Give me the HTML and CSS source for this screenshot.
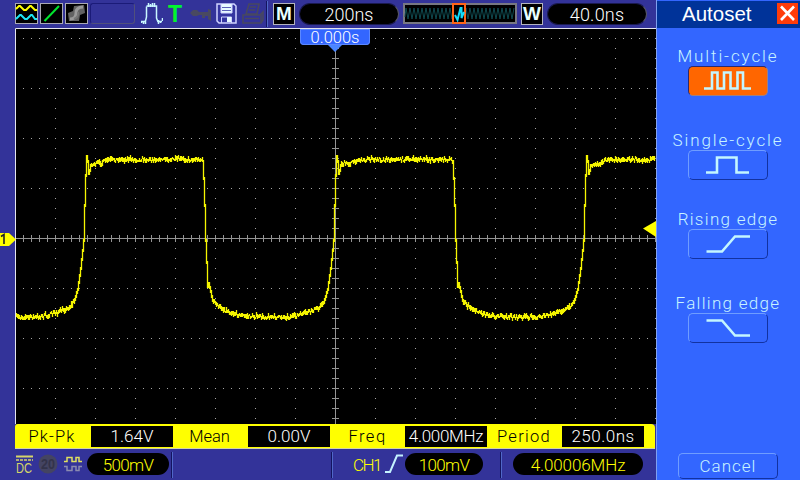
FILE: index.html
```
<!DOCTYPE html>
<html lang="en">
<head>
    <meta charset="UTF-8">
    <title>Oscilloscope</title>
    <link rel="stylesheet" href="styles.css">
</head>
<body>
    <div class="screen">
        <div class="scope">
            <div class="topbar">
                <svg class="tool" width="23" height="21" viewBox="0 0 23 21">
                    <rect x=".5" y=".5" width="22" height="20" fill="#000" stroke="#a9a9b4"/>
                    <path d="M1 6 l3 -3 h1 l4 4 h2 l4 -4 h1 l4 4 h2" fill="none" stroke="#ff0" stroke-width="2"/>
                    <path d="M1 16 l4 -4 h1 l4 4 h2 l4 -4 h1 l3 4 h2" fill="none" stroke="#1ee6f5" stroke-width="2"/>
                </svg>
                <svg class="tool" width="23" height="21" viewBox="0 0 23 21">
                    <rect x=".5" y=".5" width="22" height="20" fill="#000" stroke="#a9a9b4"/>
                    <path d="M4.500 18 L19 3" stroke="#00e62e" stroke-width="2"/>
                </svg>
                <svg class="tool" width="23" height="21" viewBox="0 0 23 21">
                    <rect x=".5" y=".5" width="22" height="20" fill="#000" stroke="#a9a9b4"/>
                    <path d="M3 10 L8 8 L9 3 L19 2 L20 10 L15 12 L14 18 L4 18 Z" fill="#626262"/>
                    <path d="M5 16 Q11 16 11 10 T18 4" fill="none" stroke="#999" stroke-width="3"/>
                    <path d="M9 16 Q14 14 13 9" fill="none" stroke="#777" stroke-width="2"/>
                </svg>
                <div class="slot"></div>
                <svg class="pulse" width="22" height="22" viewBox="0 0 22 22">
                    <path d="M.5 18v2M2.500 18v3M4.500 17v4V18L5.500 14V3.500M7.500 0v4M9.500 1v3M11.500 0v4M13.500 0v4M5.500 3h10V15l1.500 4M17.500 17v4M19.500 18v2M21.500 15v3M0 18.500h5M17 18.500h4" fill="none" stroke="#c9f7ff" stroke-width="1.500"/>
                </svg>
                <span class="trig">T</span>
                <svg class="key" width="23" height="14" viewBox="0 0 23 14">
                    <path d="M0 5 L3 2 H7 L9 4 H18 V1 L21 2 V13 L18 11 V8 H15 V10 H12 V7 H9 L7 8 H3 Z" fill="#494960"/>
                </svg>
                <svg class="disk" width="21" height="21" viewBox="0 0 21 21">
                    <path d="M1 1 H18 L20 3 V20 H3 L1 18 Z" fill="#3434a0" stroke="#cfd3ff" stroke-width="1.500"/>
                    <path d="M5 1 V10 H16 V1" fill="#e8fbff" stroke="#cfd3ff"/>
                    <path d="M6 4.500h9M6 7.500h9" stroke="#5c62b8"/>
                    <path d="M5.500 20 V14 H15.500 V20" fill="none" stroke="#cfd3ff"/>
                    <rect x="11" y="14" width="4" height="5" fill="#e8fbff"/>
                </svg>
                <svg class="printer" width="22" height="22" viewBox="0 0 22 22">
                    <path d="M7 1 H17 L15 11 H4 Z M1 12 H19 V20 H1 Z M18 12 l3 -3 v8 l-2 3 M8 4h6M7 7h6M3 15.500h14" fill="none" stroke="#484860" stroke-width="1.600"/>
                </svg>
                <div class="divider divider-top"></div>
                <div class="mode mode-m">M</div>
                <div class="pill pill-m"><span class="t18">200ns</span></div>
                <svg class="preview" width="114" height="21" viewBox="0 0 114 21">
                    <rect x="1" y="1" width="112" height="19" fill="#000" stroke="#777783" stroke-width="2"/>
                    <path id="mini" fill="none" stroke="#0f4a50" stroke-width="1"/>
                    <rect x="50" y="1" width="12" height="19" fill="#000" stroke="#ff6418" stroke-width="2"/>
                    <path d="M52 12 L54.500 17 L57.500 5 L58.500 5 V15 L61 9" fill="none" stroke="#12dcfa" stroke-width="2"/>
                </svg>
                <div class="mode mode-w">W</div>
                <div class="pill pill-w"><span class="t18 wide">40.0ns</span></div>
            </div>

            <div class="plot">
                <svg class="graph" width="641" height="396" viewBox="15 28 641 396">
                    <path id="grid" fill="none" stroke="#a6a6a6" stroke-width="1"/>
                    <path id="axis" fill="none" stroke="#949494" stroke-width="1"/>
                    <path id="trace" fill="none" stroke="#f5f500" stroke-width="1.300"/>
                    <path d="M643 228.500 L656 221 V237 Z" fill="#ff0"/>
                    <path d="M15.500 424 V28.500 H656" fill="none" stroke="#e4e4ee"/>
                </svg>
                <div class="offset">0.000s</div>
                <svg class="channel" width="16" height="15" viewBox="0 0 16 15">
                    <path d="M0 1 H9 L16 7.500 L9 14 H0 Z" fill="#ff0"/>
                    <path d="M1 4.500 L4 2.500 V12" fill="none" stroke="#222" stroke-width="1.600"/>
                </svg>
            </div>

            <div class="measures">
                <span class="name pk">Pk-Pk</span><span class="value">1.64V</span>
                <span class="name mean">Mean</span><span class="value">0.00V</span>
                <span class="name freq">Freq</span><span class="value mhz">4.000MHz</span>
                <span class="name period">Period</span><span class="value ns">250.0ns</span>
            </div>

            <div class="footer">
                <svg class="status" width="68" height="22" viewBox="0 0 68 22">
                    <path d="M1 2.500h17" stroke="#d5d56a" stroke-width="2"/>
                    <path d="M1 6h17" stroke="#d5d56a" stroke-width="1.500" stroke-dasharray="3 1"/>
                    <text class="dc" x="1" y="19" textLength="16" lengthAdjust="spacingAndGlyphs">DC</text>
                    <circle cx="33" cy="10" r="9.500" fill="#444462"/>
                    <text class="bw" x="26" y="15" textLength="14" lengthAdjust="spacingAndGlyphs">20</text>
                    <path d="M49 7.500h3v-4h5v4h4v-4h3v4h3" fill="none" stroke="#e0e060" stroke-width="1.500"/>
                    <path d="M49 12.500h3v4h5v-4h4v4h3v-4h3" fill="none" stroke="#8b8bb0" stroke-width="1.500"/>
                </svg>
                <div class="pill pill-ch"><span class="yellow mv">500mV</span></div>
                <div class="divider d1"></div>
                <div class="divider d2"></div>
                <span class="yellow ch">CH1</span>
                <svg class="slope" width="18" height="19" viewBox="0 0 18 19">
                    <path d="M0 18 H5 L12 1.500 H18" fill="none" stroke="#c4f2ff" stroke-width="2"/>
                </svg>
                <div class="pill pill-trig"><span class="yellow mv">100mV</span></div>
                <div class="divider d3"></div>
                <div class="pill pill-freq"><span class="yellow hz">4.00006MHz</span></div>
            </div>
        </div>

        <div class="menu">
            <div class="menu-head">
                <span class="title">Autoset</span>
                <svg class="close" width="21" height="21" viewBox="0 0 21 21">
                    <rect width="21" height="21" fill="#ff3c0a"/>
                    <path d="M4 3.500 L17 17 M17 3.500 L4 17" stroke="#fff" stroke-width="2.600"/>
                </svg>
            </div>
            <div class="item item1">
                <span class="label">Multi-cycle</span>
                <div class="btn active">
                    <svg width="80" height="30" viewBox="0 0 80 30"><path d="M16 22.500 H24 V6.500 H29.500 V22.500 H36 V6.500 H42.500 V22.500 H49.500 V6.500 H55 V22.500 H63"/></svg>
                </div>
            </div>
            <div class="item item2">
                <span class="label">Single-cycle</span>
                <div class="btn">
                    <svg width="80" height="30" viewBox="0 0 80 30"><path d="M18 22.500 H29 V7.500 H48.500 V22.500 H61"/></svg>
                </div>
            </div>
            <div class="item item3">
                <span class="label words">Rising edge</span>
                <div class="btn">
                    <svg width="80" height="30" viewBox="0 0 80 30"><path d="M18.500 22.500 H34 L47 7.500 H62"/></svg>
                </div>
            </div>
            <div class="item item4">
                <span class="label words">Falling edge</span>
                <div class="btn">
                    <svg width="80" height="30" viewBox="0 0 80 30"><path d="M18.500 7.500 H34 L47 22.500 H62"/></svg>
                </div>
            </div>
            <div class="btn cancel">Cancel</div>
        </div>
    </div>

    <script>
        // dotted graticule: 40 x 50 px divisions
        let grid = "";
        for (let y = 38; y < 424; y += 50) {
            for (let x = 23; x < 656; x += 8) grid += `M${x} ${y}.5h1`;
        }
        for (let x = 55; x < 660; x += 40) {
            for (let y = 48; y < 424; y += 10) grid += `M${x} ${y}.5h1`;
        }
        document.getElementById("grid").setAttribute("d", grid);

        let axis = "M15 238.5H656M335.5 38V424";
        for (let x = 23; x < 656; x += 8) axis += `M${x}.5 235v7`;
        for (let y = 48; y < 424; y += 10) axis += `M332 ${y}.5h7`;
        document.getElementById("axis").setAttribute("d", axis);

        // one period of the signal, x measured from the rising edge
        const shape = [
            [0, 240], [1, 205], [2, 175], [3, 156], [4, 161], [5, 173], [6, 170], [7, 165], [10, 164],
            [17, 163], [24, 160], [35, 159.5], [118, 159.5], [119, 161], [120, 178], [121, 205], [122, 240],
            [123, 262], [124, 286], [125, 283], [126, 287], [129, 300], [133, 305], [140, 310],
            [148, 313], [160, 316], [175, 317], [205, 317], [216, 315], [227, 311], [235, 308],
            [240, 302], [244, 289], [247, 268], [249, 250], [250, 240]
        ];

        function level(x) {
            const p = (((x - 84) % 250) + 250) % 250;
            for (let i = 1; i < shape.length; i++) {
                if (p <= shape[i][0]) {
                    const a = shape[i - 1], b = shape[i];
                    return a[1] + (b[1] - a[1]) * (p - a[0]) / (b[0] - a[0]);
                }
            }
        }

        let seed = 7;
        function rnd() {
            seed = (seed * 16807) % 2147483647;
            return seed / 2147483647;
        }

        let trace = "";
        for (let x = 16; x < 655; x++) {
            const a = level(x), b = level(x + 1);
            const steep = Math.abs(b - a) > 2;
            const shift = steep ? 0 : (rnd() - 0.5) * 3;
            const up = steep ? 1 : 0.8 + rnd() * 2.2 - shift;
            const down = steep ? 2 : 0.8 + rnd() * 2.2 + shift;
            trace += `M${x}.5 ${Math.round(Math.min(a, b) - up)}V${Math.round(Math.max(a, b) + down)}`;
        }
        document.getElementById("trace").setAttribute("d", trace);

        let mini = "M2 14";
        for (let x = 3, i = 0; x < 112; x += 2, i++) mini += `L${x} ${i % 2 ? 16 : 5}`;
        document.getElementById("mini").setAttribute("d", mini);
    </script>
</body>
</html>
```
FILE: styles.css
```
body {
    margin: 0;
    width: 800px;
    height: 480px;
    overflow: hidden;
    background: #333399;
    font-family: Roboto, "Liberation Sans", sans-serif;
    font-weight: 300;
}
svg {
    display: block;
    flex: none;
}
.screen {
    display: grid;
    grid-template-columns: 656px 144px;
    height: 480px;
}
.scope {
    display: grid;
    grid-template-rows: 28px 396px 26px 30px;
    background: #333399;
    overflow: hidden;
}
.topbar {
    display: flex;
    align-items: flex-start;
    padding: 3px 0 0 15px;
}
.tool {
    margin-right: 2px;
}
.slot {
    box-sizing: border-box;
    width: 45px;
    height: 21px;
    border: 1px solid #1b1b78;
    border-right-color: #50507c;
    border-bottom-color: #50507c;
    border-radius: 3px;
}
.pulse {
    margin-left: 6px;
}
.trig {
    width: 14px;
    margin-left: 5px;
    font: bold 23px/22px "Liberation Sans", sans-serif;
    color: #00f52d;
}
.key {
    margin: 5px 0 0 8px;
}
.disk {
    margin-left: 3px;
}
.printer {
    margin-left: 5px;
}
.divider {
    box-sizing: border-box;
    flex: none;
    width: 2px;
    height: 26px;
    background: #14145f;
    border-right: 1px solid #5068c8;
}
.divider-top {
    margin: -2px 0 0 2px;
}
.mode {
    box-sizing: border-box;
    flex: none;
    width: 22px;
    height: 22px;
    border: 1px solid #b4b4bd;
    background: #000;
    color: #e8ffff;
    font: bold 19px/20px "Liberation Sans", sans-serif;
    display: flex;
    justify-content: center;
}
.mode-m {
    margin-left: 5px;
}
.mode-w {
    margin-left: 4px;
}
.pill {
    box-sizing: border-box;
    flex: none;
    display: flex;
    justify-content: center;
    align-items: center;
    height: 22px;
    border-radius: 11px;
    background: #000;
    color: #fff;
    white-space: nowrap;
}
.pill-m,
.pill-w {
    width: 100px;
    margin-left: 4px;
    border: 1px solid #1a1a50;
    border-right-color: #555568;
}
.preview {
    margin-left: 4px;
}
.t18 {
    font-size: 18px;
    line-height: 22px;
    position: relative;
    top: 1px;
}
.wide {
    letter-spacing: 0.200px;
}
.plot {
    position: relative;
    padding-left: 15px;
    background: linear-gradient(to right, #333399 15px, #000 15px);
}
.offset {
    position: absolute;
    left: 300px;
    top: 1px;
    width: 70px;
    height: 16px;
    border-radius: 0 0 4px 4px;
    background: #3366ff;
    color: #fff;
    font-size: 16.500px;
    line-height: 17px;
    text-align: center;
    box-shadow: inset 0 0 0 1px #5c88ff;
}
.offset::after {
    content: "";
    position: absolute;
    left: 28px;
    top: 16px;
    border: 7px solid transparent;
    border-top: 7px solid #4a86ff;
    border-bottom: 0;
}
.channel {
    position: absolute;
    left: 0;
    top: 204px;
}
.measures {
    display: flex;
    box-sizing: border-box;
    width: 640px;
    height: 25px;
    margin-left: 15px;
    padding: 2px 10px 2px 0;
    background: #ff0;
    border-bottom: 1px solid #d6d6a0;
    border-radius: 3px 4px 0 0;
    font-size: 17px;
    line-height: 21px;
    white-space: nowrap;
}
.name {
    width: 75px;
    flex: none;
    color: #000;
    text-align: center;
    font-size: 16.500px;
}
.pk {
    width: 76px;
    letter-spacing: 1.200px;
    text-indent: -2px;
}
.mean {
    text-indent: -2px;
}
.period {
    letter-spacing: 1.300px;
    text-indent: -1px;
}
.freq {
    letter-spacing: 1.500px;
}
.value {
    width: 82px;
    flex: none;
    height: 21px;
    background: #000;
    color: #fff;
    text-align: center;
}
.mhz {
    letter-spacing: -0.300px;
}
.ns {
    letter-spacing: 0.500px;
}
.footer {
    display: flex;
    align-items: flex-start;
    padding: 3px 0 0 15px;
}
.status {
    margin-top: 1px;
}
.dc {
    font: 14px "Liberation Sans", sans-serif;
    fill: #d5d56a;
}
.bw {
    font: bold 14px "Liberation Sans", sans-serif;
    fill: #33334a;
}
.yellow {
    color: #ff0;
    font-size: 17px;
    line-height: 22px;
    position: relative;
    top: 1px;
}
.mv {
    letter-spacing: -0.700px;
}
.hz {
    letter-spacing: -0.100px;
}
.pill-ch {
    width: 82px;
    margin-left: 4px;
}
.footer .divider {
    margin-top: -1px;
}
.d1 {
    margin-left: 2px;
}
.d2 {
    margin-left: 158px;
}
.ch {
    width: 32px;
    margin-left: 20px;
    letter-spacing: -1.500px;
}
.slope {
    margin: 1px 2px 0 0;
}
.pill-trig {
    width: 78px;
}
.d3 {
    margin-left: 17px;
}
.pill-freq {
    width: 130px;
    margin-left: 11px;
}
.menu {
    box-sizing: border-box;
    display: flex;
    flex-direction: column;
    align-items: center;
    padding-right: 1px;
    border-left: 1px solid #7fa0f0;
    background: #3366ff;
    color: #c8f4ff;
}
.menu-head {
    box-sizing: border-box;
    display: flex;
    align-self: flex-start;
    width: 143px;
    height: 28px;
    padding: 3px 2px 0 25px;
    border-top: 1px solid #3366ff;
    background: #003399;
    justify-content: space-between;
}
.title {
    color: #fff;
    font: 20.500px/20px "Liberation Sans", sans-serif;
}
.close {
    margin-top: -1px;
}
.item {
    display: flex;
    flex-direction: column;
    align-items: center;
}
.item1 {
    margin-top: 18px;
}
.item2 {
    margin-top: 34px;
}
.item3 {
    margin-top: 29px;
}
.item4 {
    margin-top: 34px;
}
.label {
    height: 20px;
    font-size: 17px;
    line-height: 21px;
    letter-spacing: 1.900px;
    white-space: nowrap;
}
.words {
    letter-spacing: 1.300px;
}
.btn {
    box-sizing: border-box;
    width: 80px;
    height: 30px;
    border: 1px solid #6f9dff;
    border-right-color: #1232a0;
    border-bottom-color: #1232a0;
    border-radius: 5px;
}
.btn svg {
    margin: -1px;
}
.btn path {
    fill: none;
    stroke: #c4f6ff;
    stroke-width: 2.600;
}
.active {
    background: #ff6600;
    border-color: #2a2a70 #a08080 #a08080 #2a2a70;
}
.cancel {
    width: 100px;
    height: 26px;
    margin-top: 110px;
    text-align: center;
    font-size: 17px;
    line-height: 25px;
    letter-spacing: 1px;
}
```
